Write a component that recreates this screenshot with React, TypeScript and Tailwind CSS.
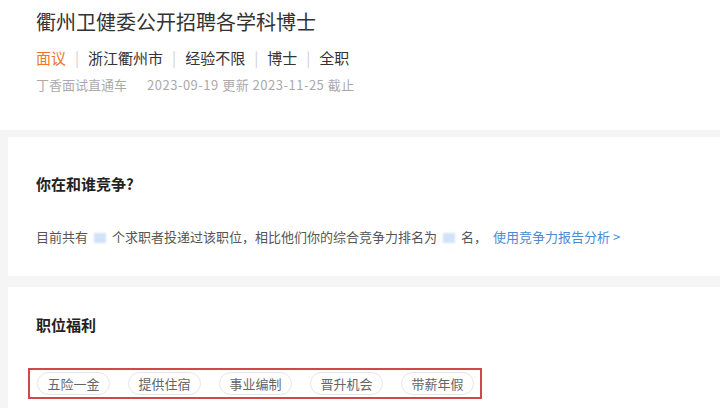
import React from 'react';

const tags = ['五险一金', '提供住宿', '事业编制', '晋升机会', '带薪年假'];

const Sep: React.FC = () => <span className="mx-[9px] text-[#d0d0d0]">|</span>;

const Blur: React.FC = () => (
  <span className="inline-block w-[12px] h-[10px] mx-[6px] bg-[#cfe2f8] blur-[1px] align-middle" />
);

const App: React.FC = () => {
  return (
    <div
      className="w-[720px] h-[408px] overflow-hidden bg-[#f5f5f5]"
      style={{ fontFamily: '"Noto Sans CJK SC", "Noto Sans", sans-serif' }}
    >
      <div className="bg-white h-[130px] pl-[36px] pt-[10px]">
        <h1 className="text-[20px] leading-[24px] text-[#333]">衢州卫健委公开招聘各学科博士</h1>
        <div className="mt-[13px] flex items-center text-[15px] leading-[22px] text-[#333]">
          <span className="text-[#f0752b]">面议</span>
          <Sep />
          <span>浙江衢州市</span>
          <Sep />
          <span>经验不限</span>
          <Sep />
          <span>博士</span>
          <Sep />
          <span>全职</span>
        </div>
        <div className="mt-[6px] flex text-[13px] leading-[20px] text-[#aaa]">
          <span>丁香面试直通车</span>
          <span className="ml-[20px] tracking-[0.5px]">2023-09-19 更新 2023-11-25 截止</span>
        </div>
      </div>

      <div className="pl-[8px] pt-[7px]">
        <div className="bg-white h-[139px] pl-[28px] pt-[36px]">
          <h2 className="text-[15px] leading-[22px] font-bold text-[#222]">你在和谁竞争?</h2>
          <p className="mt-[31px] text-[13px] leading-[22px] text-[#555]">
            目前共有<Blur />个求职者投递过该职位，相比他们你的综合竞争力排名为<Blur />名，
            <span className="ml-[6px] text-[#4a8bd6]">使用竞争力报告分析 &gt;</span>
          </p>
        </div>

        <div className="mt-[11px] bg-white h-[130px] pl-[28px] pt-[27px]">
          <h2 className="text-[15px] leading-[22px] font-bold text-[#222]">职位福利</h2>
          <div className="mt-[32px] -ml-[8px] w-[454px] border-2 border-[#d2474a] pl-[7px] py-[2px] flex gap-[18px]">
            {tags.map((t) => (
              <span
                key={t}
                className="w-[73px] h-[23px] rounded-full border border-[#e6e6e6] flex items-center justify-center text-[13px] text-[#666]"
              >
                {t}
              </span>
            ))}
          </div>
        </div>
      </div>
    </div>
  );
};

export default App;
